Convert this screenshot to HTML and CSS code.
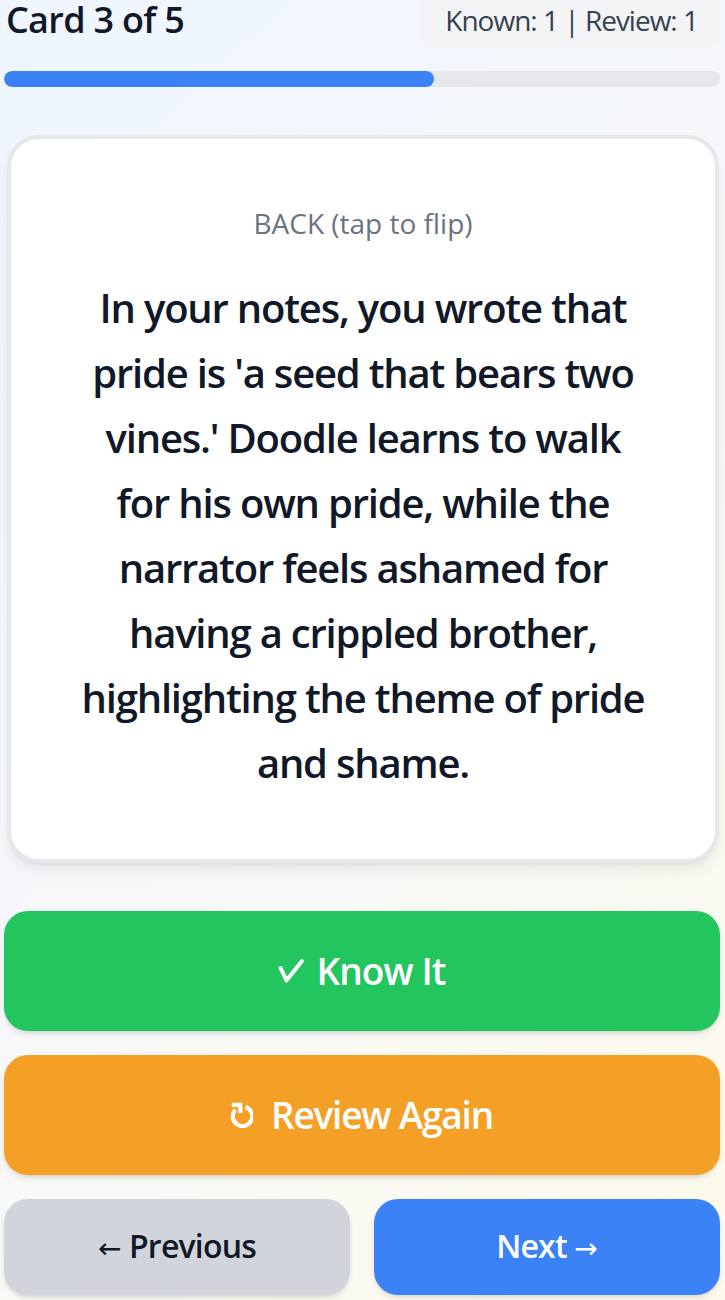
FILE: index.html
```html
<!DOCTYPE html>
<html lang="en">
<head>
<meta charset="utf-8">
<title>Flashcards</title>
<link rel="stylesheet" href="styles.css">
</head>
<body>
<main class="app">
  <header class="topbar">
    <h1 class="counter">Card 3 of 5</h1>
    <div class="stats">Known: 1 | Review: 1</div>
  </header>
  <div class="progress"><div class="progress-fill" style="width:60%"></div></div>
  <section class="card">
    <p class="side">BACK (tap to flip)</p>
    <p class="answer">In your notes, you wrote that pride is 'a seed that bears two vines.' Doodle learns to walk for his own pride, while the narrator feels ashamed for having a crippled brother, highlighting the theme of pride and shame.</p>
  </section>
  <div class="actions">
    <button class="btn btn-big btn-know">
      <svg class="icon-check" width="26" height="24" viewBox="0 0 26 24" aria-hidden="true"><path d="M2.6 9 L8.4 21.4 L23.8 2.2" fill="none" stroke="#fff" stroke-width="4" stroke-linecap="round" stroke-linejoin="round"/></svg>
      <span>Know It</span>
    </button>
    <button class="btn btn-big btn-review">
      <svg class="icon-redo" width="22" height="26" viewBox="0 0 20 24" aria-hidden="true"><path d="M13.2 4.6 A9 9 0 1 1 3.8 7.2" fill="none" stroke="#fff" stroke-width="3.8"/><path d="M0.6 2.6 H8.4 V10.2" fill="none" stroke="#fff" stroke-width="3.8" stroke-linejoin="miter"/></svg>
      <span>Review Again</span>
    </button>
    <div class="nav">
      <button class="btn btn-nav btn-prev"><span class="arrow">←</span> Previous</button>
      <button class="btn btn-nav btn-next">Next <span class="arrow">→</span></button>
    </div>
  </div>
</main>
</body>
</html>
```
FILE: styles.css
```css
* { box-sizing: border-box; }
html, body { margin: 0; padding: 0; }
body {
  min-height: 1300px;
  background: linear-gradient(135deg, #eff6ff 0%, #f7f8fa 50%, #fefbec 100%);
  font-family: "Open Sans", "Noto Sans", "DejaVu Sans", sans-serif;
  color: #111827;
}
.app {
  width: 716px;
  margin-left: 4px;
}
.topbar {
  display: flex;
  justify-content: space-between;
  align-items: flex-start;
  height: 48px;
  padding-left: 2px;
}
.counter {
  margin: 0;
  font-size: 36px;
  line-height: 40px;
  font-weight: 600;
  letter-spacing: -0.7px;
  color: #111827;
}
.stats {
  margin-top: -8px;
  background: #f3f4f6;
  border-radius: 16px;
  padding: 8px 22px 8px 25px;
  font-size: 28px;
  line-height: 40px;
  font-weight: 500;
  letter-spacing: -1px;
  color: #374151;
}
.progress {
  margin-top: 23px;
  height: 16px;
  border-radius: 8px;
  background: #e5e7eb;
  overflow: hidden;
}
.progress-fill {
  height: 100%;
  background: #3b82f6;
  border-radius: 8px;
}
.card {
  margin: 48px 1px 0 3px;
  background: #fff;
  border: 4px solid #e5e7eb;
  border-radius: 32px;
  padding: 64px 64px;
  text-align: center;
  box-shadow: 0 10px 15px -3px rgba(0,0,0,0.08), 0 4px 6px -4px rgba(0,0,0,0.08);
}
.side {
  margin: 0 0 32px;
  font-size: 28px;
  line-height: 40px;
  font-weight: 500;
  color: #6b7280;
}
.answer {
  margin: 0;
  font-size: 40px;
  line-height: 65px;
  font-weight: 600;
  letter-spacing: -1.2px;
  color: #111827;
}
.actions {
  margin-top: 48px;
  display: flex;
  flex-direction: column;
  gap: 24px;
}
.btn {
  border: 0;
  font-family: inherit;
  font-weight: 600;
  color: #fff;
  border-radius: 24px;
  cursor: pointer;
  box-shadow: 0 4px 6px -1px rgba(0,0,0,0.1), 0 2px 4px -2px rgba(0,0,0,0.1);
}
.btn-big {
  width: 100%;
  height: 120px;
  display: flex;
  align-items: center;
  justify-content: center;
  font-size: 37px;
  line-height: 56px;
  letter-spacing: -0.9px;
}
.btn-know { background: #22c55e; gap: 12px; }
.btn-review { background: #f49f25; gap: 18px; letter-spacing: -1.2px; }
.icon-check, .icon-redo { display: block; flex: none; }
.nav {
  display: flex;
  gap: 24px;
}
.btn-nav {
  flex: 1;
  height: 96px;
  padding: 0;
  font-size: 32px;
  line-height: 48px;
  letter-spacing: -0.8px;
}
.arrow {
  font-family: "DejaVu Sans", sans-serif;
  font-weight: 400;
  letter-spacing: 0;
  font-size: 28px;
}
.btn-prev { background: #d1d5db; color: #111827; }
.btn-next { background: #3b82f6; }
```
